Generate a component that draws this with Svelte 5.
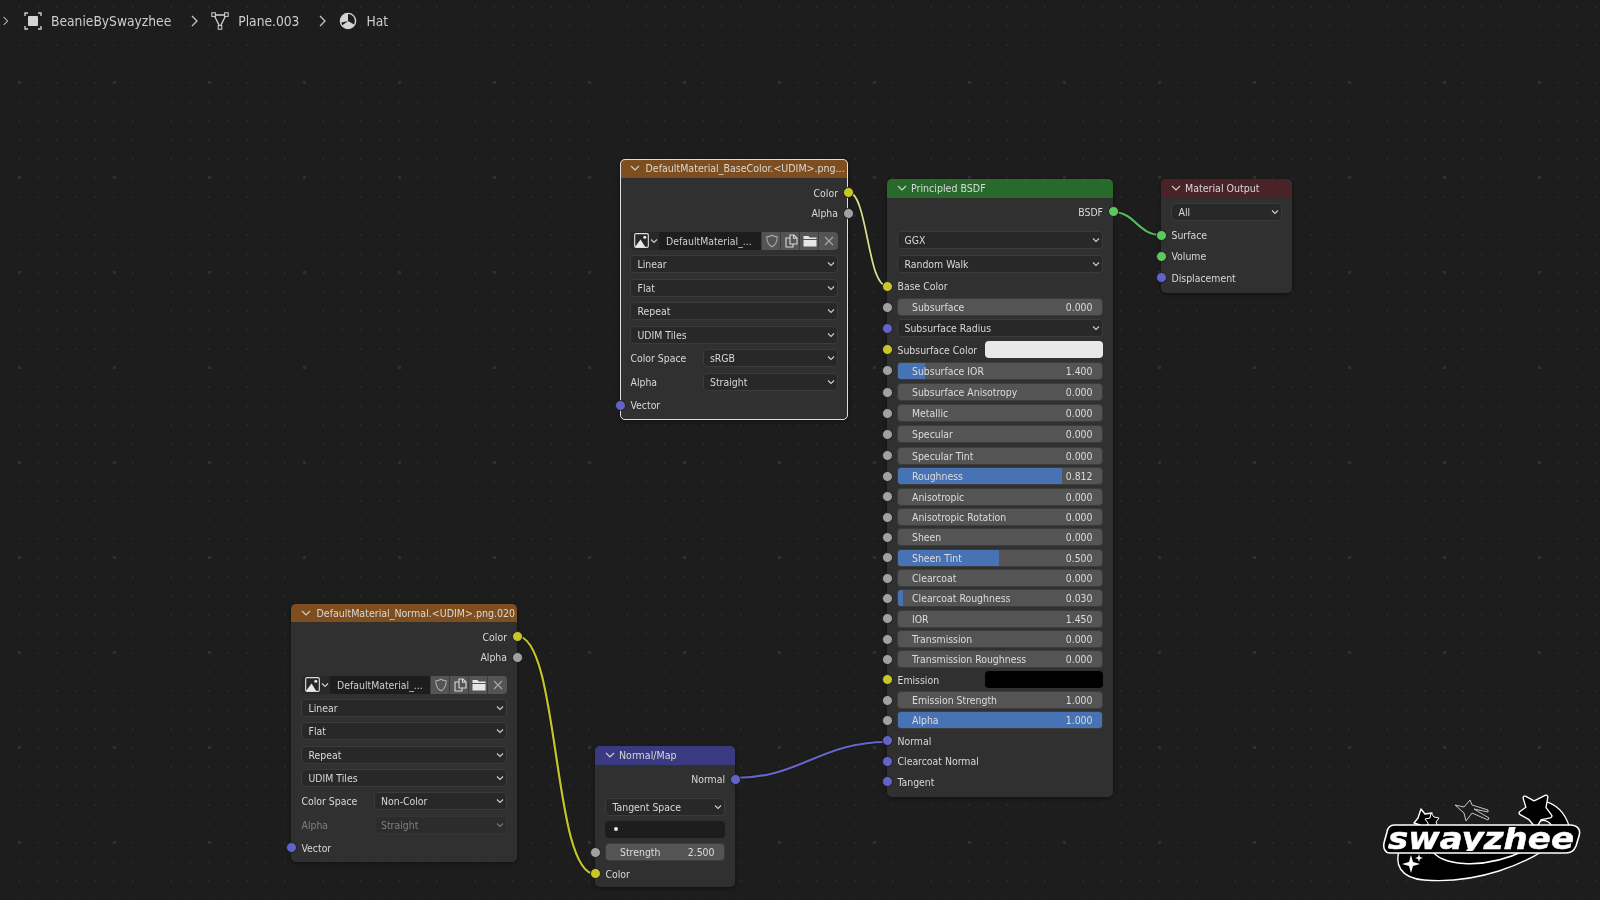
<script>
  const grey = 'grey', yellow = 'yellow', blue = 'blue', green = 'green';
  const imageRows = (colorSpace, dimmed) => [
    { kind: 'output', label: 'Color', socket: yellow, h: 21, gap: 1 },
    { kind: 'output', label: 'Alpha', socket: grey, h: 20.5 },
    { kind: 'image', gap: 5.75 },
    { kind: 'select', value: 'Linear' },
    { kind: 'select', value: 'Flat' },
    { kind: 'select', value: 'Repeat' },
    { kind: 'select', value: 'UDIM Tiles' },
    { kind: 'pair', label: 'Color Space', value: colorSpace },
    { kind: 'pair', label: 'Alpha', value: 'Straight', dimmed },
    { kind: 'input', label: 'Vector', socket: blue }
  ];

  const nodes = [
    {
      id: 'base', title: 'DefaultMaterial_BaseColor.<UDIM>.png...', accent: 'image', selected: true,
      x: 620, y: 159, w: 228, h: 261, rowH: 23.45, rows: imageRows('sRGB', false)
    },
    {
      id: 'normal', title: 'DefaultMaterial_Normal.<UDIM>.png.020', accent: 'image',
      x: 291, y: 604, w: 226, h: 258, head: 18, rowH: 23.3, rows: imageRows('Non-Color', true)
    },
    {
      id: 'map', title: 'Normal/Map', accent: 'vector',
      x: 595, y: 746, w: 140, h: 141, rowH: 22.8,
      rows: [
        { kind: 'output', label: 'Normal', socket: blue },
        { kind: 'select', value: 'Tangent Space', gap: 4.5 },
        { kind: 'blank' },
        { kind: 'slider', label: 'Strength', value: '2.500', socket: grey, pct: 0 },
        { kind: 'input', label: 'Color', socket: yellow, h: 20 }
      ]
    },
    {
      id: 'bsdf', title: 'Principled BSDF', accent: 'shader',
      x: 887, y: 179, w: 226, h: 618, rowH: 21.2,
      rows: [
        { kind: 'output', label: 'BSDF', socket: green, h: 21 },
        { kind: 'select', value: 'GGX', h: 21, gap: 7 },
        { kind: 'select', value: 'Random Walk', h: 21, gap: 3 },
        { kind: 'input', label: 'Base Color', socket: yellow, gap: 1.5 },
        { kind: 'slider', label: 'Subsurface', value: '0.000', socket: grey, pct: 0 },
        { kind: 'select', value: 'Subsurface Radius', socket: blue },
        { kind: 'color', label: 'Subsurface Color', socket: yellow, swatch: 'white' },
        { kind: 'slider', label: 'Subsurface IOR', value: '1.400', socket: grey, pct: 13 },
        { kind: 'slider', label: 'Subsurface Anisotropy', value: '0.000', socket: grey, pct: 0 },
        { kind: 'slider', label: 'Metallic', value: '0.000', socket: grey, pct: 0 },
        { kind: 'slider', label: 'Specular', value: '0.000', socket: grey, pct: 0 },
        { kind: 'slider', label: 'Specular Tint', value: '0.000', socket: grey, pct: 0 },
        { kind: 'slider', label: 'Roughness', value: '0.812', socket: grey, pct: 80.5, h: 20.35 },
        { kind: 'slider', label: 'Anisotropic', value: '0.000', socket: grey, pct: 0, h: 20.35 },
        { kind: 'slider', label: 'Anisotropic Rotation', value: '0.000', socket: grey, pct: 0, h: 20.35 },
        { kind: 'slider', label: 'Sheen', value: '0.000', socket: grey, pct: 0, h: 20.35 },
        { kind: 'slider', label: 'Sheen Tint', value: '0.500', socket: grey, pct: 49.5, h: 20.35 },
        { kind: 'slider', label: 'Clearcoat', value: '0.000', socket: grey, pct: 0, h: 20.35 },
        { kind: 'slider', label: 'Clearcoat Roughness', value: '0.030', socket: grey, pct: 2.5, h: 20.35 },
        { kind: 'slider', label: 'IOR', value: '1.450', socket: grey, pct: 0, h: 20.35 },
        { kind: 'slider', label: 'Transmission', value: '0.000', socket: grey, pct: 0, h: 20.35 },
        { kind: 'slider', label: 'Transmission Roughness', value: '0.000', socket: grey, pct: 0, h: 20.35 },
        { kind: 'color', label: 'Emission', socket: yellow, swatch: 'black', h: 20.35 },
        { kind: 'slider', label: 'Emission Strength', value: '1.000', socket: grey, pct: 0, h: 20.35 },
        { kind: 'slider', label: 'Alpha', value: '1.000', socket: grey, pct: 100, h: 20.35 },
        { kind: 'input', label: 'Normal', socket: blue, h: 20.35 },
        { kind: 'input', label: 'Clearcoat Normal', socket: blue, h: 20.35 },
        { kind: 'input', label: 'Tangent', socket: blue, h: 20.35 }
      ]
    },
    {
      id: 'output', title: 'Material Output', accent: 'output',
      x: 1161, y: 179, w: 131, h: 114, rowH: 21.4,
      rows: [
        { kind: 'select', value: 'All', gap: 0 },
        { kind: 'input', label: 'Surface', socket: green, gap: 2 },
        { kind: 'input', label: 'Volume', socket: green },
        { kind: 'input', label: 'Displacement', socket: blue }
      ]
    }
  ];

  const wires = [
    { d: 'M848 192 C868 192 867 286 887 286', color: '#d9d98f', w: 1.8 },
    { d: 'M517 636 C560 636 552 874 595 874', color: '#c4c42a', w: 2.2 },
    { d: 'M735 778 C800 778 820 742 887 742', color: '#6565c9', w: 2.2 },
    { d: 'M1113 212 C1135 212 1138 235 1161 235', color: '#52b85a', w: 2.2 }
  ];
</script>

<div class="editor">
  <nav class="crumbs">
    <svg class="chev first" viewBox="0 0 10 14"><path d="M2 2l5 5-5 5" /></svg>
    <svg class="crumb-icon" viewBox="0 0 18 18">
      <path class="frame" d="M1 4V1h3M14 1h3v3M17 14v3h-3M4 17H1v-3" />
      <rect x="4" y="4" width="10" height="10" rx="1" fill="#d4d4d4" />
    </svg>
    <span>BeanieBySwayzhee</span>
    <svg class="chev" viewBox="0 0 10 14"><path d="M2 2l5 5-5 5" /></svg>
    <svg class="crumb-icon" viewBox="0 0 18 18">
      <path class="frame" d="M3 3h12L9 15zM3 3" />
      <rect x="0.8" y="0.8" width="3.6" height="3.6" fill="#1d1d1d" stroke="#d4d4d4" />
      <rect x="13.6" y="0.8" width="3.6" height="3.6" fill="#1d1d1d" stroke="#d4d4d4" />
      <rect x="7.2" y="13.6" width="3.6" height="3.6" fill="#1d1d1d" stroke="#d4d4d4" />
    </svg>
    <span>Plane.003</span>
    <svg class="chev" viewBox="0 0 10 14"><path d="M2 2l5 5-5 5" /></svg>
    <svg class="crumb-icon" viewBox="0 0 18 18">
      <circle cx="9" cy="9" r="7.6" fill="#1d1d1d" stroke="#d4d4d4" stroke-width="1.4" />
      <path d="M9 1.4a7.6 7.6 0 0 0-7.4 9.4L9 9z M9 9l6.5 3.8A7.6 7.6 0 0 1 3 13.6z" fill="#d4d4d4" />
    </svg>
    <span>Hat</span>
  </nav>

  <svg class="wires" viewBox="0 0 1600 900">
    {#each wires as wire}
      <path d={wire.d} stroke="#161616" stroke-width={wire.w + 1.6} fill="none" />
      <path d={wire.d} stroke={wire.color} stroke-width={wire.w} fill="none" />
    {/each}
  </svg>

  {#each nodes as node (node.id)}
    <section
      class="node"
      class:selected={node.selected}
      style="left:{node.x}px;top:{node.y}px;width:{node.w}px;height:{node.h}px;--row:{node.rowH}px;--head:{node.head ?? 19}px"
    >
      <header class="tint-{node.accent}">
        <svg class="collapse" viewBox="0 0 10 8"><path d="M1 2l4 4 4-4" /></svg>
        <span class="title">{node.title}</span>
      </header>
      <div class="body">
        {#each node.rows as row}
          <div
            class="row row-{row.kind}"
            class:dimmed={row.dimmed}
            style:height={row.h ? `${row.h}px` : null}
            style:margin-top={row.gap ? `${row.gap}px` : null}
          >
            {#if row.socket}
              <i class="socket {row.socket}" class:right={row.kind === 'output'}></i>
            {/if}

            {#if row.kind === 'output' || row.kind === 'input'}
              <span class="label">{row.label}</span>
            {:else if row.kind === 'select'}
              <div class="dropdown">
                <span>{row.value}</span>
                <svg class="caret" viewBox="0 0 8 6"><path d="M1 1.5l3 3 3-3" /></svg>
              </div>
            {:else if row.kind === 'pair'}
              <span class="label side">{row.label}</span>
              <div class="dropdown">
                <span>{row.value}</span>
                <svg class="caret" viewBox="0 0 8 6"><path d="M1 1.5l3 3 3-3" /></svg>
              </div>
            {:else if row.kind === 'slider'}
              <div class="slider">
                <b style="width:{row.pct}%"></b>
                <span class="name">{row.label}</span>
                <span class="num">{row.value}</span>
              </div>
            {:else if row.kind === 'color'}
              <span class="label side-color">{row.label}</span>
              <div class="swatch {row.swatch}"></div>
            {:else if row.kind === 'blank'}
              <div class="field"><em></em></div>
            {:else if row.kind === 'image'}
              <div class="picker">
                <div class="browse">
                  <svg viewBox="0 0 16 16" class="pic">
                    <rect x="0.7" y="0.7" width="14.6" height="14.6" rx="1.5" fill="none" stroke="#dcdcdc" stroke-width="1.2" />
                    <path d="M1 15l6-8 5 8z" fill="#e8e8e8" />
                    <circle cx="11.5" cy="4.5" r="1.6" fill="#e8e8e8" />
                  </svg>
                  <svg class="caret" viewBox="0 0 8 6"><path d="M1 1.5l3 3 3-3" /></svg>
                </div>
                <div class="imgname">DefaultMaterial_...</div>
                <div class="tool">
                  <svg viewBox="0 0 14 14"><path class="ln" d="M7 1.2c1.6 1 3.6 1.5 5.2 1.6 0 4.4-1.6 8.2-5.2 10-3.6-1.8-5.2-5.6-5.2-10C3.4 2.7 5.4 2.2 7 1.2z" /></svg>
                </div>
                <div class="tool">
                  <svg viewBox="0 0 14 14">
                    <path class="ln bright" d="M6 1h4l3 3v6H6zM9.5 1v3.2H13" />
                    <path class="ln bright" d="M6 4H2v9h7v-3" />
                  </svg>
                </div>
                <div class="tool">
                  <svg viewBox="0 0 14 14"><path d="M0.5 2h5l1.2 1.6h6.8V5H0.5zM0.5 6h13v6.5H0.5z" fill="#e6e6e6" /></svg>
                </div>
                <div class="tool">
                  <svg viewBox="0 0 14 14"><path class="ln" d="M3 3l8 8M11 3l-8 8" /></svg>
                </div>
              </div>
            {/if}
          </div>
        {/each}
      </div>
    </section>
  {/each}

  <svg class="logo" viewBox="0 0 230 120" aria-label="swayzhee">
    <defs>
      <clipPath id="plate-clip"><rect x="14" y="47" width="196" height="24" /></clipPath>
    </defs>
    <!-- swoosh under the wordmark -->
    <path
      d="M30 68 C24 84 30 98 54 100 C100 104 160 88 197 52 L62 70 C68 84 110 92 156 70 L160 68 Z"
      fill="#000" stroke="#fff" stroke-width="1.4" stroke-linejoin="round"
    />
    <!-- big star and its tail -->
    <path d="M172 22 C186 25 194 34 198 47 L184 47 C180 38 172 37 165 42 Z" fill="#000" stroke="#fff" stroke-width="4" stroke-linejoin="round" />
    <path d="M172 22 C186 25 194 34 198 47 L184 47 C180 38 172 37 165 42 Z" fill="#000" stroke="#000" stroke-width="1.5" stroke-linejoin="round" />
    <path
      class="star-edge"
      d="M155 18 L164 23 L176 17 L174 28 L180 36 L170 38 L166 45 L160 38 L151 33 L158 28 Z"
    />
    <path
      class="star-fill"
      d="M155 18 L164 23 L176 17 L174 28 L180 36 L170 38 L166 45 L160 38 L151 33 L158 28 Z"
    />
    <!-- small stars, top left -->
    <path d="M51 29 L55 34 L62 33 L60 39 L64 44 L57 45 L54 50 L50 45 L44 43 L48 38 Z" fill="#000" stroke="#fff" stroke-width="1.4" stroke-linejoin="round" />
    <path d="M61 33 L64 37 L69 38 L66 42 L68 47 L63 46 L58 48 L58 43 L55 39 L60 38 Z" fill="#000" stroke="#fff" stroke-width="1" />
    <!-- outlined shooting star -->
    <path
      d="M85 25 L94 27 L100 20 L102 25 L118 30 L118 32 L104 29 L119 38 L118 40 L102 33 L96 41 L94 33 Z"
      fill="#1d1d1d" stroke="#c4c4c4" stroke-width="1" stroke-linejoin="round"
    />
    <!-- wordmark plate -->
    <path
      d="M24 45 H200 C208 45 211 50 209 56 L206 66 C204 71 200 73 196 73 H20 C15 73 13 68 14 63 L17 52 C18 47 20 45 24 45 Z"
      fill="#000" stroke="#fff" stroke-width="1.6"
    />
    <g clip-path="url(#plate-clip)">
      <text class="word" x="18" y="69" textLength="186" lengthAdjust="spacingAndGlyphs">swayzhee</text>
    </g>
    <!-- sparkles -->
    <path d="M41 75 L43 82 L50 84 L43 86 L41 93 L39 86 L32 84 L39 82 Z" fill="#fff" />
    <path d="M49 74 L50 77 L53 78 L50 79 L49 82 L48 79 L45 78 L48 77 Z" fill="#fff" />
  </svg>
</div>

<style>
  :global(body) {
    background: #1d1d1d;
  }

  .editor {
    position: relative;
    width: 1600px;
    height: 900px;
    overflow: hidden;
    background-color: #1d1d1d;
    background-image:
      radial-gradient(circle at 1.5px 1.5px, #303030 1.6px, transparent 2px),
      radial-gradient(circle at 1px 1px, #272727 1.1px, transparent 1.5px);
    background-size: 95px 95px, 19px 19px;
    background-position: 18px 81px, -1px 6px;
    font-family: "DejaVu Sans Condensed", "DejaVu Sans", sans-serif;
    font-stretch: condensed;
    font-size: 10.4px;
    color: #d8d8d8;
    filter: blur(0.35px);
  }

  .crumbs {
    display: flex;
    align-items: center;
    height: 42px;
    padding-left: 2px;
    font-size: 13.7px;
    color: #cdcdcd;
  }

  .chev {
    width: 10px;
    height: 14px;
    margin: 0 9px 0 19px;
    fill: none;
    stroke: #c4c4c4;
    stroke-width: 1.3;
  }

  .chev.first {
    margin: 0 12px 0 0;
    width: 8px;
  }

  .crumb-icon {
    width: 18px;
    height: 18px;
    margin-right: 9px;
    margin-left: 2px;
  }

  .frame {
    fill: none;
    stroke: #d4d4d4;
    stroke-width: 1.3;
  }

  .wires {
    position: absolute;
    inset: 0;
    width: 1600px;
    height: 900px;
    pointer-events: none;
  }

  .node {
    position: absolute;
    box-sizing: border-box;
    display: flex;
    flex-direction: column;
    border-radius: 5px;
    background: #303030;
    box-shadow: 0 1px 4px rgba(0, 0, 0, 0.45);
  }

  .node.selected {
    outline: 1.4px solid #dedede;
    outline-offset: -1px;
  }

  .node header {
    display: flex;
    align-items: center;
    flex: none;
    height: var(--head);
    padding-left: 10px;
    padding-bottom: 1px;
    box-sizing: border-box;
    gap: 4px;
    border-radius: 5px 5px 0 0;
    font-size: 10.55px;
    color: #d8d8d8;
    white-space: nowrap;
    overflow: hidden;
  }

  .tint-image {
    background: #7f4e1f;
  }

  .tint-image .title {
    margin-left: 1.5px;
  }

  .tint-vector {
    background: #3a3a82;
  }

  .tint-shader {
    background: #286a2c;
  }

  .tint-output {
    background: #4a2329;
  }

  .collapse {
    flex: none;
    width: 10px;
    height: 8px;
    fill: none;
    stroke: #cfcfcf;
    stroke-width: 1.1;
  }

  .body {
    display: flex;
    flex-direction: column;
    padding: 3px 10px 0;
  }

  .row {
    position: relative;
    display: flex;
    align-items: center;
    flex: none;
    height: var(--row);
    white-space: nowrap;
  }

  .row-output {
    justify-content: flex-end;
  }

  .row .label {
    margin-left: 0.5px;
  }

  .dimmed {
    opacity: 0.45;
  }

  .socket {
    position: absolute;
    left: -15.5px;
    top: 50%;
    width: 9px;
    height: 9px;
    margin-top: -5.5px;
    border: 1px solid #1b1b1b;
    border-radius: 50%;
  }

  .socket.right {
    left: auto;
    right: -15.5px;
  }

  .grey {
    background: #a1a1a1;
  }

  .yellow {
    background: #c7c729;
  }

  .blue {
    background: #6363c7;
  }

  .green {
    background: #5cc85f;
  }

  .dropdown {
    box-sizing: border-box;
    flex: 1;
    display: flex;
    align-items: center;
    justify-content: space-between;
    height: 18px;
    padding: 0 2px 0 6.5px;
    border: 1px solid #3b3b3b;
    border-radius: 4px;
    background: #282828;
    color: #d8d8d8;
  }

  .caret {
    flex: none;
    width: 8px;
    height: 6px;
    fill: none;
    stroke: #cfcfcf;
    stroke-width: 1.1;
  }

  .side {
    flex: none;
    width: 72px;
  }

  .side-color {
    flex: none;
    width: 87px;
  }

  .slider {
    position: relative;
    box-sizing: border-box;
    flex: 1;
    display: flex;
    justify-content: space-between;
    align-items: center;
    height: 18px;
    padding: 0 9.5px 0 14px;
    overflow: hidden;
    border: 1px solid #3c3c3c;
    border-radius: 4px;
    background: #545454;
    color: #dcdcdc;
  }

  .slider b {
    position: absolute;
    left: 0;
    top: 0;
    bottom: 0;
    background: #4772b3;
  }

  .slider span {
    position: relative;
  }

  .swatch {
    flex: 1;
    height: 17px;
    border-radius: 4px;
  }

  .swatch.white {
    background: #e8e8e8;
  }

  .swatch.black {
    background: #000;
  }

  .field {
    box-sizing: border-box;
    flex: 1;
    display: flex;
    align-items: center;
    height: 17px;
    padding-left: 9px;
    border-radius: 4px;
    background: #1d1d1d;
  }

  .field em {
    width: 4px;
    height: 4px;
    border-radius: 50%;
    background: #e6e6e6;
  }

  .picker {
    flex: 1;
    display: flex;
    height: 18px;
    overflow: hidden;
    border-radius: 4px;
    background: #282828;
  }

  .browse {
    flex: none;
    display: flex;
    align-items: center;
    gap: 1px;
    width: 29px;
    padding-left: 4px;
    box-sizing: border-box;
  }

  .pic {
    width: 15px;
    height: 15px;
  }

  .imgname {
    flex: 1;
    padding-left: 7px;
    line-height: 18px;
    background: #1d1d1d;
    color: #cfcfcf;
  }

  .tool {
    flex: none;
    display: flex;
    align-items: center;
    justify-content: center;
    width: 19px;
    border-left: 1px solid #3c3c3c;
    margin-left: -1px;
    background: #545454;
  }

  .tool svg {
    width: 14px;
    height: 14px;
  }

  .ln {
    fill: none;
    stroke: #a9a9a9;
    stroke-width: 1.1;
  }

  .ln.bright {
    stroke: #d8d8d8;
  }

  .logo {
    position: absolute;
    left: 1370px;
    top: 780px;
    width: 230px;
    height: 120px;
  }

  .star-edge {
    fill: #fff;
    stroke: #fff;
    stroke-width: 5;
    stroke-linejoin: round;
  }

  .star-fill {
    fill: #000;
    stroke: #000;
    stroke-width: 2.4;
    stroke-linejoin: round;
  }

  .word {
    font-family: "DejaVu Sans", sans-serif;
    font-stretch: normal;
    font-weight: 700;
    font-style: oblique;
    font-size: 31px;
    fill: #fff;
    stroke: #fff;
    stroke-width: 0.5;
  }
</style>
